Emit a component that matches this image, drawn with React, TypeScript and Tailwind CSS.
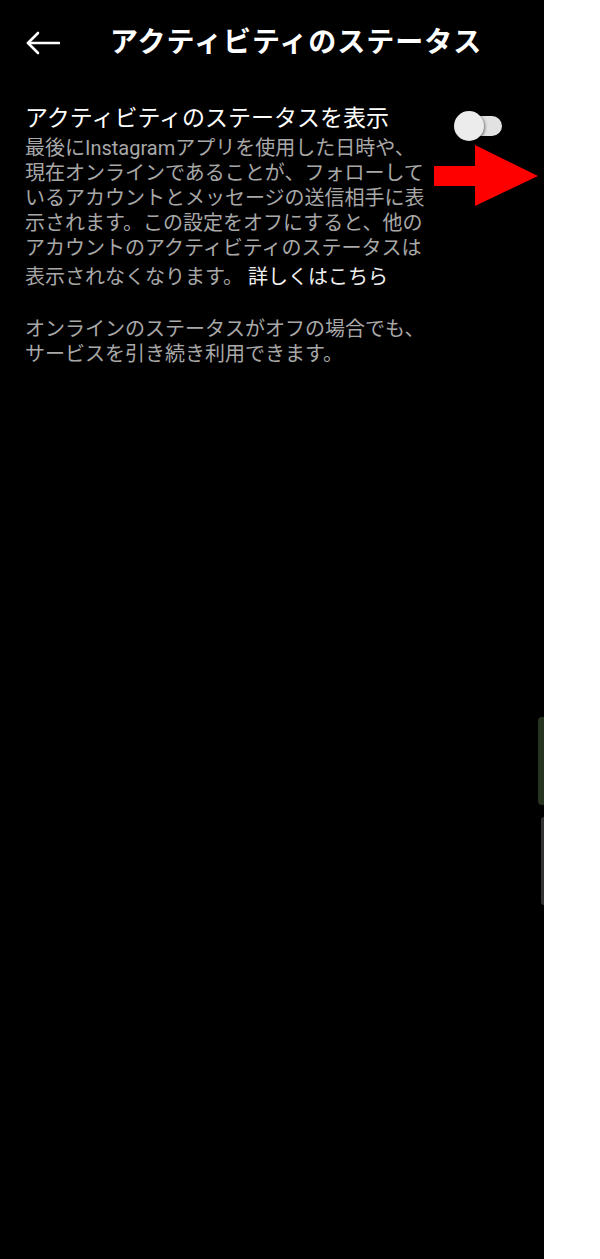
export default function App() {
  const font = { fontFamily: "Roboto, 'Noto Sans CJK JP', sans-serif" };

  return (
    <div className="w-[600px] h-[1259px] bg-white flex" style={font}>
      <div className="relative w-[544px] h-full bg-black">
        {/* header */}
        <div className="flex items-center h-[86px] pl-[26px]">
          <svg width="34" height="24" viewBox="0 0 34 24" fill="none" stroke="white" strokeWidth="2.6" strokeLinecap="round" strokeLinejoin="round">
            <path d="M33 12H2" />
            <path d="M12 2L2 12L12 22" />
          </svg>
          <h1 className="ml-[50px] text-[28px] font-bold text-white leading-none tracking-[1px]">
            アクティビティのステータス
          </h1>
        </div>

        {/* setting row */}
        <div className="flex pl-[25px] pr-[42px] pt-[19px]">
          <div className="flex-1">
            <p className="text-[23px] leading-[28px] text-white whitespace-nowrap">
              アクティビティのステータスを表示
            </p>
            <p className="mt-[3px] text-[20px] leading-[25px] text-[#a8a8a8] whitespace-nowrap">
              最後にInstagramアプリを使用した日時や、
              <br />
              現在オンラインであることが、フォローして
              <br />
              いるアカウントとメッセージの送信相手に表
              <br />
              示されます。この設定をオフにすると、他の
              <br />
              アカウントのアクティビティのステータスは
            </p>
            <p className="mt-[4px] text-[20px] leading-[25px] text-[#a8a8a8] whitespace-nowrap">
              表示されなくなります。 <span className="text-[#f0f0f0]">詳しくはこちら</span>
            </p>
          </div>
          <div className="relative w-[48px] h-[30px] mt-[6px] -ml-[60px]">
            <div className="absolute right-0 top-[5px] w-[46px] h-[20px] rounded-full bg-[#e2e2e2]" />
            <div className="absolute left-0 top-0 w-[30px] h-[30px] rounded-full bg-[#ececec] shadow-[1px_1px_3px_rgba(0,0,0,0.5)]" />
          </div>
        </div>

        <p className="pl-[25px] mt-[27px] text-[20px] leading-[25px] text-[#a8a8a8] whitespace-nowrap">
          オンラインのステータスがオフの場合でも、
          <br />
          サービスを引き続き利用できます。
        </p>

        {/* red arrow overlay */}
        <svg className="absolute left-[434px] top-[145px]" width="106" height="62" viewBox="0 0 106 62">
          <polygon points="0,21 41,21 41,0 104,31 41,61 41,41 0,41" fill="#ff0000" />
        </svg>

        {/* edge handles */}
        <div className="absolute right-0 top-[717px] w-[6px] h-[88px] rounded-l-[4px] bg-[#26331f]" />
        <div className="absolute right-0 top-[817px] w-[3px] h-[88px] rounded-l-[3px] bg-[#333333]" />
      </div>
    </div>
  );
}
